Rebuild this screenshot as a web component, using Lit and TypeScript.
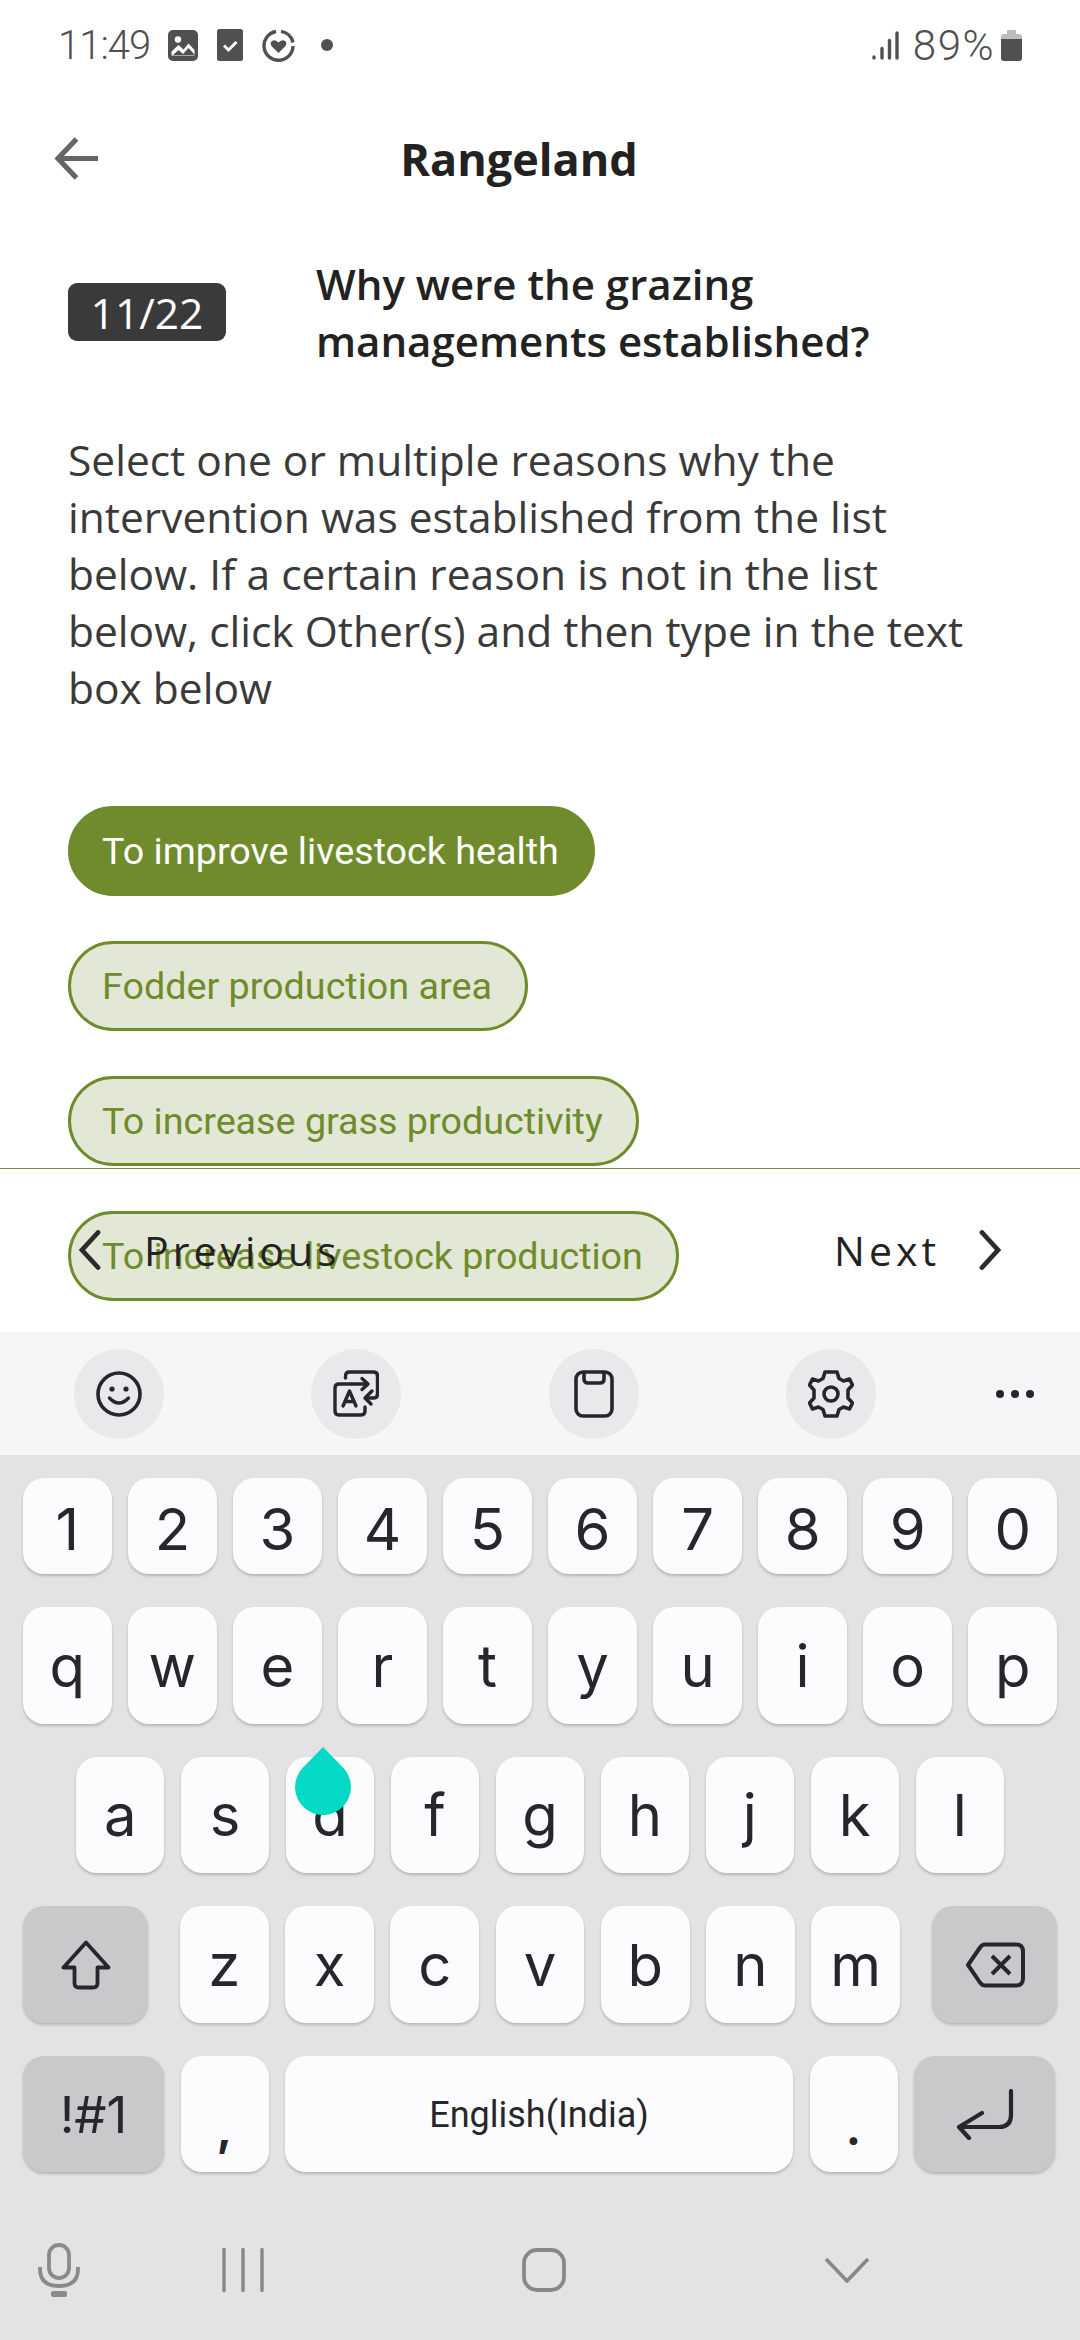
import { LitElement, css, html, svg } from 'lit'
import { customElement } from 'lit/decorators.js'

const CHIPS = [
  { label: 'To improve livestock health', selected: true },
  { label: 'Fodder production area', selected: false },
  { label: 'To increase grass productivity', selected: false },
  { label: 'To increase livestock production', selected: false }
]

const DIGITS = '1234567890'.split('')
const TOP_ROW = 'qwertyuiop'.split('')
const HOME_ROW = 'asdfghjkl'.split('')
const LOWER_ROW = 'zxcvbnm'.split('')

const icon = (w: number, h: number, body: unknown) => html`
  <svg width=${w} height=${h} viewBox="0 0 ${w} ${h}" fill="none">${body}</svg>
`

const ICONS = {
  image: icon(30, 31, svg`
    <rect width="30" height="31" rx="5" fill="#505050"/>
    <circle cx="10" cy="9.500" r="3.200" fill="#fff"/>
    <path d="M3.500 24.500v-3l7-6.500 5 4.500 5-6 6 6.500v4.500q0 1.500-1.500 1.500h-20q-1.500 0-1.500-1.500z" fill="#fff"/>
    <path d="M4 26l6.500-6 4.500 4 5.500-6 5.500 6v1.500H4z" fill="#505050"/>
  `),
  check: icon(26, 32, svg`
    <rect width="26" height="32" rx="2.500" fill="#505050"/>
    <path d="M7 16.500l4.500 4.500 8-8" stroke="#fff" stroke-width="3"/>
  `),
  ring: icon(33, 33, svg`
    <path d="M14 2.500A14.500 14.500 0 1 0 31 17" stroke="#505050" stroke-width="3.400"/>
    <path d="M19 2.400A14.500 14.500 0 0 1 31 13.500" stroke="#505050" stroke-width="3.400"/>
    <path d="M16.500 24l-7-7q-2-3 .5-5t6.500 1.500q4-3.500 6.500-1.500t.5 5z" fill="#505050"/>
  `),
  signal: icon(27, 29, svg`
    <g stroke="#505050" stroke-width="3.400" stroke-linecap="round">
      <path d="M2 26v1"/><path d="M10 17.500V27"/><path d="M17.500 9.500V27"/><path d="M25 2v25"/>
    </g>
  `),
  battery: icon(21, 31, svg`
    <path d="M7 0h7q1 0 1 1v3h3q3 0 3 3v2H0V7q0-3 3-3h3V1q0-1 1-1z" fill="#bdbdbd"/>
    <path d="M0 9h21v19q0 3-3 3H3q-3 0-3-3z" fill="#505050"/>
  `),
  back: icon(46, 45, svg`
    <path d="M44 22.500H4M22.500 3L4 22.500 22.500 42" stroke="#666" stroke-width="5.200"/>
  `),
  chevronLeft: icon(24, 40, svg`
    <path d="M20 2.500L4 20l16 17.500" stroke="#2b2b2b" stroke-width="4.800" stroke-linecap="round"/>
  `),
  chevronRight: icon(24, 40, svg`
    <path d="M4 2.500L20 20 4 37.500" stroke="#2b2b2b" stroke-width="4.800" stroke-linecap="round"/>
  `),
  smile: icon(46, 46, svg`
    <circle cx="23" cy="23" r="21" stroke="#26272b" stroke-width="3.600"/>
    <circle cx="16" cy="18" r="2.600" fill="#26272b"/><circle cx="30" cy="18" r="2.600" fill="#26272b"/>
    <path d="M13.500 27q9.500 10 19 0" stroke="#26272b" stroke-width="3.400" stroke-linecap="round"/>
  `),
  translate: icon(46, 47, svg`
    <g stroke="#26272b" stroke-width="3.400" stroke-linecap="round" stroke-linejoin="round">
      <path d="M12.500 8V6q0-4 4-4h24q4 0 4 4v18q0 4-4 4h-8"/>
      <path d="M34 14H6q-4 0-4 4v23q0 4 4 4h22q4 0 4-4v-4"/>
      <path d="M29 8.500l6 5.500-6 5.500"/>
      <path d="M39 21l-7 7 6 6"/>
      <path d="M10 36l6.500-15L23 36M12 31.500h9"/>
    </g>
  `),
  clipboard: icon(40, 48, svg`
    <rect x="2" y="2" width="36" height="44" rx="7" stroke="#26272b" stroke-width="3.600"/>
    <path d="M10 2v7q0 4 4 4h12q4 0 4-4V2" stroke="#26272b" stroke-width="3.600"/>
  `),
  gear: icon(46, 48, svg`
    <path d="M17 2h12l2 6.500 4.500 2.500 6-2 3 6-4.500 5v8l4.500 5-3 6-6-2-4.500 2.500-2 6.500H17l-2-6.500-4.500-2.500-6 2-3-6 4.500-5v-8L1.500 15l3-6 6 2 4.500-2.500z" stroke="#26272b" stroke-width="3.600" stroke-linejoin="round"/>
    <circle cx="23" cy="24" r="7" stroke="#26272b" stroke-width="3.600"/>
  `),
  shift: icon(50, 50, svg`
    <path d="M25 2.500L2.500 27.500h11V43q0 4.500 4.500 4.500h14q4.500 0 4.500-4.500V27.500h11z" stroke="#26272b" stroke-width="3.800" stroke-linejoin="round"/>
  `),
  backspace: icon(60, 46, svg`
    <path d="M20 2.500h31q7 0 7 7v27q0 7-7 7H20q-3 0-5-3L3 23 15 5.500q2-3 5-3z" stroke="#26272b" stroke-width="4" stroke-linejoin="round"/>
    <path d="M27 14l18 18M45 14L27 32" stroke="#26272b" stroke-width="4"/>
  `),
  enter: icon(58, 51, svg`
    <path d="M55 2v24q0 12-12 12H4" stroke="#26272b" stroke-width="4.200" stroke-linecap="round"/>
    <path d="M26 24L3 38l10 11" stroke="#26272b" stroke-width="4.200" stroke-linecap="round" stroke-linejoin="round"/>
  `),
  mic: icon(44, 54, svg`
    <rect x="12" y="2" width="20" height="33" rx="10" stroke="#8a8a8c" stroke-width="3.800"/>
    <path d="M3 24v2q0 17 19 17t19-17v-2" stroke="#8a8a8c" stroke-width="3.800"/>
    <rect x="14" y="48" width="16" height="6" rx="2" fill="#8a8a8c"/>
  `),
  recents: icon(42, 44, svg`
    <path d="M2 1.500v41M21 1.500v41M40 1.500v41" stroke="#88888a" stroke-width="3.400" stroke-linecap="round"/>
  `),
  home: icon(44, 44, svg`
    <rect x="2" y="2" width="40" height="40" rx="13" stroke="#88888a" stroke-width="3.800"/>
  `),
  hide: icon(46, 26, svg`
    <path d="M2 2l21 22L44 2" stroke="#88888a" stroke-width="3.600"/>
  `),
  drop: icon(56, 68, svg`
    <path d="M28 0L48.500 21A28 28 0 1 1 7.500 21z" fill="#03d9c4"/>
  `)
}

@customElement('app-root')
export class AppRoot extends LitElement {
  renderKey(label: string) {
    return html`<div class="key">${label}</div>`
  }

  renderStatusBar() {
    return html`
      <div class="status">
        <span class="status-time">11:49</span>
        <span class="status-left">${ICONS.image}${ICONS.check}${ICONS.ring}<i class="status-dot"></i></span>
        <span class="status-right">${ICONS.signal}<span class="status-pct">89%</span>${ICONS.battery}</span>
      </div>
    `
  }

  renderForm() {
    return html`
      <div class="header">
        ${ICONS.back}
        <div class="title">Rangeland</div>
      </div>
      <div class="question">
        <div class="badge">11/22</div>
        <div class="question-text">Why were the grazing managements established?</div>
      </div>
      <p class="hint">Select one or multiple reasons why the intervention was established from the list below. If a certain reason is not in the list below, click Other(s) and then type in the text box below</p>
      <div class="chips">
        ${CHIPS.map(chip => html`<div class="chip ${chip.selected ? 'selected' : ''}">${chip.label}</div>`)}
      </div>
      <div class="pager">
        <div class="pager-item prev">${ICONS.chevronLeft}<span>Previous</span></div>
        <div class="pager-item next"><span>Next</span>${ICONS.chevronRight}</div>
      </div>
    `
  }

  renderKeyboard() {
    return html`
      <div class="toolbar">
        <div class="tool">${ICONS.smile}</div>
        <div class="tool">${ICONS.translate}</div>
        <div class="tool">${ICONS.clipboard}</div>
        <div class="tool">${ICONS.gear}</div>
        <div class="tool-more"><i></i><i></i><i></i></div>
      </div>
      <div class="keys">
        <div class="row digits">${DIGITS.map(k => this.renderKey(k))}</div>
        <div class="row">${TOP_ROW.map(k => this.renderKey(k))}</div>
        <div class="row home-row">${HOME_ROW.map(k => this.renderKey(k))}<div class="cursor">${ICONS.drop}</div></div>
        <div class="row">
          <div class="key special side side-left">${ICONS.shift}</div>
          ${LOWER_ROW.map(k => this.renderKey(k))}
          <div class="key special side side-right">${ICONS.backspace}</div>
        </div>
        <div class="row last-row">
          <div class="key special symbols">!#1</div>
          <div class="key punct">,</div>
          <div class="key space">English(India)</div>
          <div class="key punct">.</div>
          <div class="key special enter">${ICONS.enter}</div>
        </div>
      </div>
      <div class="nav">
        <div class="nav-mic">${ICONS.mic}</div>
        <div class="nav-recents">${ICONS.recents}</div>
        <div class="nav-home">${ICONS.home}</div>
        <div class="nav-hide">${ICONS.hide}</div>
      </div>
    `
  }

  render() {
    return html`
      <div class="page">
        <div class="content">
          ${this.renderStatusBar()}
          ${this.renderForm()}
        </div>
        <div class="keyboard">${this.renderKeyboard()}</div>
      </div>
    `
  }

  static styles = css`
    :host {
      display: block;
      width: 1080px;
      height: 2340px;
      background: #fff;
      font-family: 'Open Sans', sans-serif;
    }

    svg {
      display: block;
      flex: none;
    }

    .page {
      display: flex;
      flex-direction: column;
      height: 2340px;
      overflow: hidden;
    }

    .content {
      position: relative;
      height: 1332px;
      flex: none;
      overflow: hidden;
      background: #fff;
    }

    .status {
      display: flex;
      align-items: center;
      height: 90px;
      padding-left: 58px;
      padding-right: 58px;
      color: #505050;
      font-family: Roboto, sans-serif;
      font-weight: 300;
      font-size: 40px;
    }

    .status-time {
      letter-spacing: -1px;
    }

    .status-left {
      display: flex;
      align-items: center;
      gap: 19px;
      margin-left: 18px;
      flex: 1;
    }

    .status-dot {
      width: 12px;
      height: 12px;
      border-radius: 50%;
      background: #505050;
      margin-left: 7px;
    }

    .status-right {
      display: flex;
      align-items: center;
    }

    .status-pct {
      margin: 0 6px 0 14px;
      font-size: 42px;
      letter-spacing: 1.500px;
    }

    .header {
      display: flex;
      align-items: center;
      height: 96px;
      margin-top: 20px;
      padding-left: 54px;
      padding-right: 142px;
    }

    .title {
      flex: 1;
      text-align: center;
      font-size: 45px;
      font-weight: 700;
      color: #222;
    }

    .question {
      display: flex;
      align-items: center;
      margin-top: 49px;
      padding-left: 68px;
      padding-right: 60px;
    }

    .badge {
      width: 158px;
      height: 58px;
      flex: none;
      display: flex;
      align-items: center;
      justify-content: center;
      border-radius: 9px;
      background: #3a3a3a;
      color: #fff;
      font-size: 42.500px;
      font-weight: 500;
    }

    .question-text {
      margin-left: 90px;
      font-size: 42px;
      line-height: 57px;
      font-weight: 600;
      color: #222;
    }

    .hint {
      margin: 62px 100px 0 68px;
      font-size: 42.500px;
      line-height: 57px;
      color: #3a3a3a;
    }

    .chips {
      display: flex;
      flex-direction: column;
      align-items: flex-start;
      gap: 45px;
      margin-top: 90px;
      padding-left: 68px;
    }

    .chip {
      box-sizing: border-box;
      height: 90px;
      display: flex;
      align-items: center;
      padding: 0 33px 0 31px;
      border: 3px solid #708b2b;
      border-radius: 45px;
      background: #e2e8d5;
      color: #708b2b;
      font-family: Roboto, sans-serif;
      font-size: 37.700px;
      white-space: nowrap;
    }

    .chip.selected {
      background: #708b2b;
      color: #fff;
    }

    .pager {
      position: absolute;
      left: 0;
      right: 0;
      top: 1168px;
      height: 164px;
      box-sizing: border-box;
      border-top: 1px solid #708b2b;
      display: flex;
      align-items: center;
      justify-content: space-between;
      padding: 0 78px 2px;
      color: #222;
      font-size: 41px;
      letter-spacing: 4px;
    }

    .pager-item {
      display: flex;
      align-items: center;
    }

    .prev span {
      margin-left: 42px;
    }

    .next span {
      margin-right: 38px;
    }

    .keyboard {
      flex: 1;
      background: #e3e3e5;
      font-family: Inter, sans-serif;
      color: #26272b;
    }

    .toolbar {
      height: 123px;
      display: flex;
      align-items: center;
      padding-left: 74px;
      gap: 147.300px;
      background: #f6f6f8;
    }

    .tool {
      width: 90px;
      height: 90px;
      border-radius: 50%;
      background: #e9e9eb;
      display: flex;
      align-items: center;
      justify-content: center;
    }

    .tool-more {
      display: flex;
      gap: 7px;
      margin-left: -27px;
    }

    .tool-more i {
      width: 8px;
      height: 8px;
      border-radius: 50%;
      background: #26272b;
    }

    .keys {
      display: flex;
      flex-direction: column;
      gap: 33px;
      padding: 23px 23px 0;
    }

    .row {
      position: relative;
      display: flex;
      gap: 16.500px;
      height: 117px;
    }

    .row.digits {
      height: 96px;
    }

    .row.digits .key {
      box-sizing: border-box;
      padding-top: 5px;
    }

    .row.home-row {
      height: 116px;
      padding: 0 53px;
    }

    .row.last-row {
      height: 116px;
    }

    .key {
      flex: 1;
      display: flex;
      align-items: center;
      justify-content: center;
      border-radius: 21px;
      background: #fcfcfe;
      box-shadow: 0 2px 3px rgba(0, 0, 0, 0.2);
      font-size: 58px;
      font-weight: 400;
    }

    .key.special {
      background: #c9c9cb;
    }

    .key.side {
      flex: none;
      width: 125px;
    }

    .key.side-left {
      margin-right: 15.500px;
    }

    .key.side-right {
      margin-left: 15.500px;
    }

    .key.symbols {
      flex: none;
      width: 141px;
      font-size: 51px;
    }

    .key.enter {
      flex: none;
      width: 141px;
    }

    .key.punct {
      flex: none;
      width: 88px;
      font-weight: 700;
      font-size: 46px;
      padding-top: 28px;
      box-sizing: border-box;
    }

    .key.space {
      flex: none;
      width: 508px;
      padding-top: 2px;
      box-sizing: border-box;
      font-family: Roboto, sans-serif;
      font-size: 36px;
    }

    .cursor {
      position: absolute;
      left: 272px;
      top: -10px;
    }

    .nav {
      display: flex;
      align-items: center;
      height: 130px;
      margin-top: 33px;
      padding-left: 37px;
    }

    .nav-recents {
      margin-left: 141px;
    }

    .nav-home {
      margin-left: 258px;
    }

    .nav-hide {
      margin-left: 258px;
    }
  `
}
